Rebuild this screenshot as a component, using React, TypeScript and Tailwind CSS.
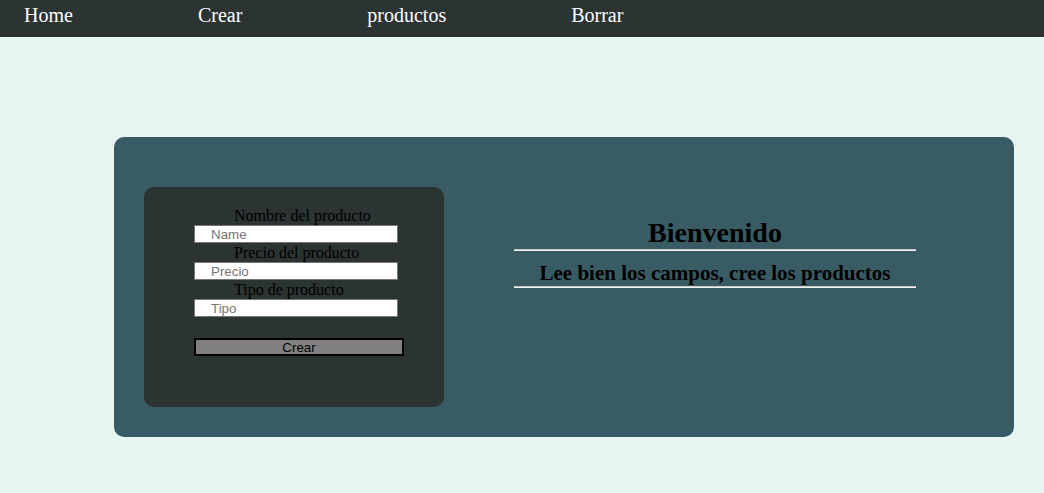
export default function App() {
  const links = ["Home", "Crear", "productos", "Borrar"];
  const inputCls =
    "h-[18px] w-[204px] border border-[#767676] bg-white pl-4 pt-px font-['Liberation_Sans',sans-serif] text-[13.33px] leading-[15px] text-black placeholder:text-[#757575]";
  const labelCls = "pl-[40px] text-[16px] leading-[18px] text-black";
  return (
    <div className="min-h-[493px] bg-[#e7f6f2] font-['Liberation_Serif',serif]">
      <nav className="flex h-[37px] items-start gap-[125px] bg-[#2c3333] pl-6 pt-[4px]">
        {links.map((l) => (
          <a key={l} href="#" className="text-[20px] leading-[23px] text-white">
            {l}
          </a>
        ))}
      </nav>

      <main className="ml-[114px] mt-[100px] flex h-[300px] w-[900px] rounded-[10px] bg-[#395b64]">
        <div className="ml-[30px] mt-[50px] h-[220px] w-[300px] rounded-[10px] bg-[#2c3333] pt-[20px]">
          <form className="ml-[50px] flex w-[216px] flex-col">
            <label className={labelCls}>Nombre del producto</label>
            <input placeholder="Name" className={inputCls} />
            <label className={`mt-[1px] ${labelCls}`}>Precio del producto</label>
            <input placeholder="Precio" className={inputCls} />
            <label className={`mt-[1px] ${labelCls}`}>Tipo de producto</label>
            <input placeholder="Tipo" className={inputCls} />
            <button
              type="button"
              className="mt-[21px] h-[18px] w-[210px] border-2 border-black bg-[#808080] pt-px font-['Liberation_Sans',sans-serif] text-[13.33px] leading-[13px] text-black"
            >
              Crear
            </button>
          </form>
        </div>

        <section className="ml-[70px] mt-[80px] w-[402px] text-center text-black">
          <h1 className="text-[28px] font-bold leading-[32px]">Bienvenido</h1>
          <hr className="mt-0 border-t border-b border-t-[#c8c8c8] border-b-[#f0f0f0]" />
          <h2 className="mt-[10px] text-[21px] font-bold leading-[24px]">Lee bien los campos, cree los productos</h2>
          <hr className="mt-[1px] border-t border-b border-t-[#c8c8c8] border-b-[#f0f0f0]" />
        </section>
      </main>
    </div>
  );
}
